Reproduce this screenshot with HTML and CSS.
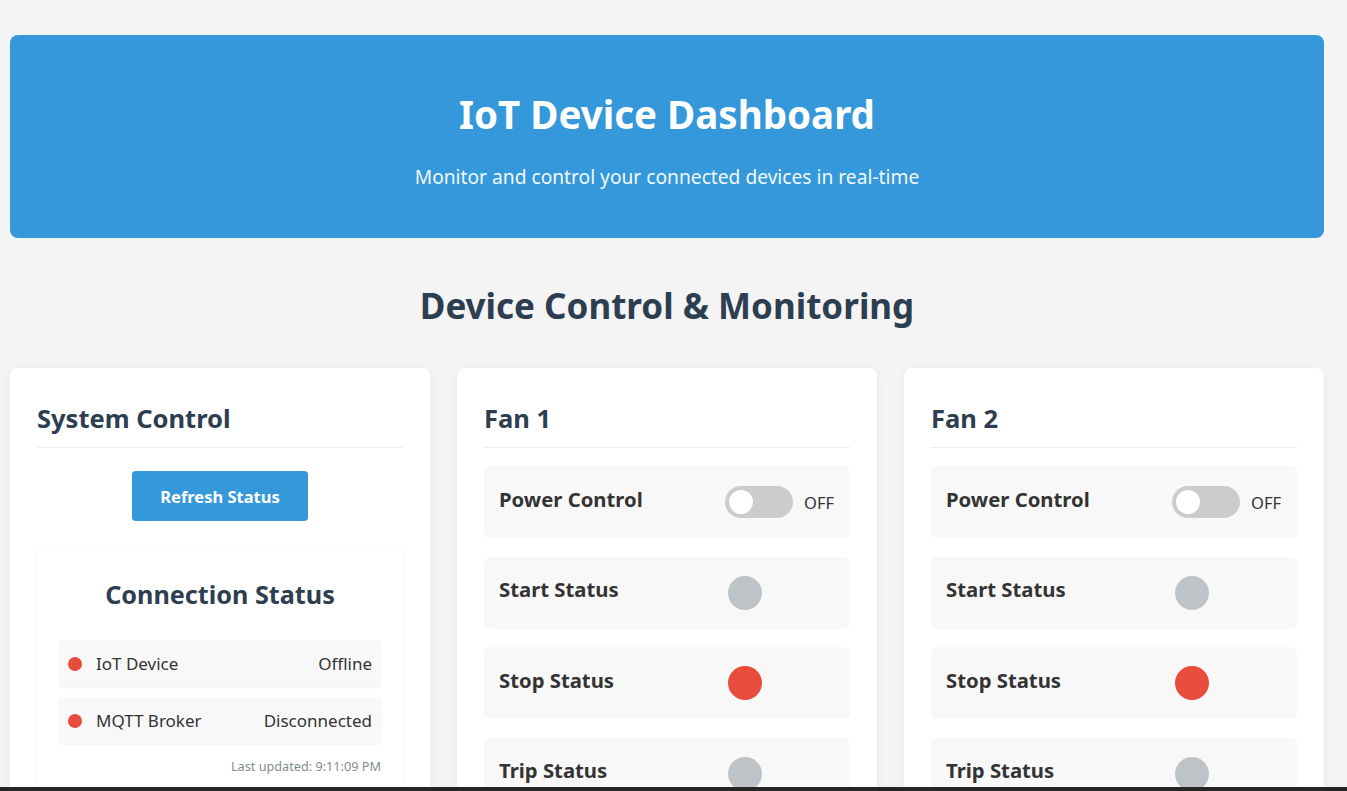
FILE: index.html
```html
<!DOCTYPE html>
<html lang="en">
<head>
<meta charset="utf-8">
<title>IoT Device Dashboard</title>
<link rel="stylesheet" href="styles.css">
</head>
<body>
<div class="page">
  <header class="hero">
    <h1 class="hero-title">IoT Device Dashboard</h1>
    <p class="hero-sub">Monitor and control your connected devices in real-time</p>
  </header>

  <h2 class="section-title">Device Control &amp; Monitoring</h2>

  <div class="grid">
    <section class="card">
      <h3 class="card-title">System Control</h3>
      <div class="btn-wrap"><button class="btn">Refresh Status</button></div>
      <div class="conn">
        <h3 class="conn-title">Connection Status</h3>
        <div class="conn-row">
          <span class="dot"></span><span class="conn-name">IoT Device</span><span class="conn-val">Offline</span>
        </div>
        <div class="conn-row">
          <span class="dot"></span><span class="conn-name">MQTT Broker</span><span class="conn-val">Disconnected</span>
        </div>
        <div class="updated">Last updated: 9:11:09 PM</div>
      </div>
    </section>

    <section class="card">
      <h3 class="card-title">Fan 1</h3>
      <div class="row">
        <span class="label">Power Control</span>
        <div class="ctrl"><span class="toggle"><span class="knob"></span></span><span class="state">OFF</span></div>
      </div>
      <div class="row">
        <span class="label">Start Status</span>
        <div class="ctrl"><span class="led"></span></div>
      </div>
      <div class="row">
        <span class="label">Stop Status</span>
        <div class="ctrl"><span class="led led-red"></span></div>
      </div>
      <div class="row">
        <span class="label">Trip Status</span>
        <div class="ctrl"><span class="led"></span></div>
      </div>
    </section>

    <section class="card">
      <h3 class="card-title">Fan 2</h3>
      <div class="row">
        <span class="label">Power Control</span>
        <div class="ctrl"><span class="toggle"><span class="knob"></span></span><span class="state">OFF</span></div>
      </div>
      <div class="row">
        <span class="label">Start Status</span>
        <div class="ctrl"><span class="led"></span></div>
      </div>
      <div class="row">
        <span class="label">Stop Status</span>
        <div class="ctrl"><span class="led led-red"></span></div>
      </div>
      <div class="row">
        <span class="label">Trip Status</span>
        <div class="ctrl"><span class="led"></span></div>
      </div>
    </section>
  </div>
</div>
<div class="taskbar"></div>
</body>
</html>
```

FILE: styles.css
```css
* { box-sizing: border-box; }
html, body { margin: 0; padding: 0; }
body {
  background: #f4f4f4;
  font-family: "Segoe UI", "Noto Sans", "Open Sans", sans-serif;
  color: #333;
  overflow: hidden;
}
.page {
  width: 1314px;
  margin-left: 10px;
  padding-top: 35px;
}
.hero {
  background: #3498db;
  border-radius: 8px;
  height: 203px;
  padding-top: 55px;
  text-align: center;
  color: #fff;
}
.hero-title {
  margin: 0;
  font-size: 38.5px;
  line-height: 48px;
  font-weight: 700;
}
.hero-sub {
  margin: 27px 0 0;
  font-size: 19.2px;
  line-height: 24px;
  color: #f2f8fd;
}
.section-title {
  margin: 46px 0 40px;
  text-align: center;
  font-size: 35px;
  line-height: 44px;
  color: #2c3e50;
  font-weight: 700;
}
.grid {
  display: grid;
  grid-template-columns: repeat(3, 420px);
  column-gap: 27px;
}
.card {
  background: #fff;
  border-radius: 8px;
  padding: 33px 27px 20px;
  box-shadow: 0 2px 10px rgba(0,0,0,0.05);
  height: 440px;
}
.card-title {
  margin: 0;
  font-size: 25.5px;
  line-height: 34px;
  font-weight: 700;
  color: #2c3e50;
  padding-bottom: 12px;
  border-bottom: 1px solid #eee;
  margin-bottom: 18px;
}
.btn-wrap {
  text-align: center;
  margin-top: 23px;
}
.btn {
  height: 50px;
  padding: 0 28px;
  background: #3498db;
  color: #fff;
  border: none;
  border-radius: 4px;
  font-family: inherit;
  font-size: 16.5px;
  font-weight: 700;
}
.conn {
  margin-top: 27px;
  background: #fff;
  border-radius: 8px;
  box-shadow: 0 2px 6px rgba(0,0,0,0.06);
  padding: 29px 22px 20px;
}
.conn-title {
  margin: 0 0 29px;
  text-align: center;
  font-size: 25.2px;
  line-height: 34px;
  font-weight: 700;
  color: #2c3e50;
}
.conn-row {
  display: flex;
  align-items: center;
  height: 47px;
  padding: 0 9px;
  margin-bottom: 10px;
  background: #f8f8f8;
  border-radius: 4px;
  box-shadow: 0 1px 2px rgba(0,0,0,0.06);
  font-size: 17px;
  color: #333;
}
.dot {
  width: 14px;
  height: 14px;
  border-radius: 50%;
  background: #e74c3c;
  margin-right: 14px;
  flex: none;
}
.conn-name { flex: 1; }
.conn-val { text-align: right; }
.updated {
  margin-top: 14px;
  text-align: right;
  font-size: 12.7px;
  line-height: 16px;
  color: #7f8c8d;
}
.row {
  display: flex;
  align-items: center;
  height: 72px;
  padding: 0 15px;
  margin-bottom: 18.5px;
  background: #f8f8f8;
  border-radius: 6px;
}
.label {
  flex: 1;
  font-size: 20.3px;
  font-weight: 700;
  color: #333;
  margin-bottom: 7px;
}
.ctrl {
  width: 110px;
  display: flex;
  align-items: center;
}
.toggle {
  position: relative;
  width: 68px;
  height: 32px;
  border-radius: 16px;
  background: #ccc;
  flex: none;
}
.knob {
  position: absolute;
  left: 4px;
  top: 4px;
  width: 24px;
  height: 24px;
  border-radius: 50%;
  background: #fff;
}
.state {
  margin-left: 11px;
  font-size: 16.5px;
  color: #333;
}
.led {
  width: 34px;
  height: 34px;
  border-radius: 50%;
  background: #bdc3c7;
  margin-left: 3px;
}
.led-red { background: #e74c3c; }
.taskbar {
  position: fixed;
  left: 0;
  right: 0;
  bottom: 0;
  height: 4px;
  background: #262624;
}
```
